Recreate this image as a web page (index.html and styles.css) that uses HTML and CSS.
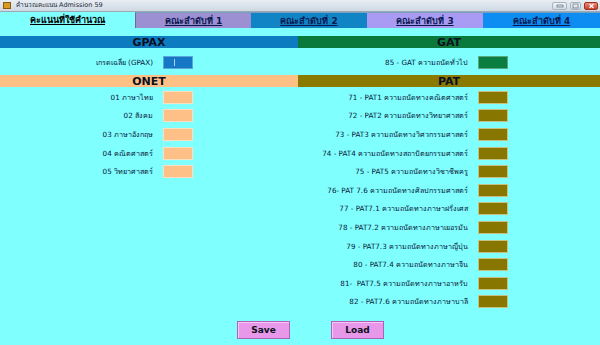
FILE: index.html
```html
<!DOCTYPE html>
<html lang="th">
<head>
<meta charset="utf-8">
<title>คำนวณคะแนน Admission 59</title>
<link rel="stylesheet" href="styles.css">
</head>
<body>
<div class="window">
  <div class="titlebar">
    <span class="app-icon"></span>
    <span class="title">คำนวณคะแนน Admission 59</span>
    <div class="controls">
      <span class="ctl min"><svg width="8" height="6" viewBox="0 0 8 6"><rect x="1" y="2" width="6" height="2" fill="none" stroke="#6a7a8a" stroke-width="0.8"/></svg></span>
      <span class="ctl max"><svg width="7" height="6" viewBox="0 0 7 6"><rect x="1" y="1" width="5" height="4" fill="none" stroke="#6a7a8a" stroke-width="0.8"/></svg></span>
      <span class="ctl close"><svg width="7" height="6" viewBox="0 0 7 6"><path d="M1.5 1L5.5 5M5.5 1L1.5 5" stroke="#fff" stroke-width="1.2"/></svg></span>
    </div>
  </div>
  <div class="tabs">
    <div class="tab tab-active">คะแนนที่ใช้คำนวณ</div>
    <div class="tab tab-f1">คณะลำดับที่ 1</div>
    <div class="tab tab-f2">คณะลำดับที่ 2</div>
    <div class="tab tab-f3">คณะลำดับที่ 3</div>
    <div class="tab tab-f4">คณะลำดับที่ 4</div>
  </div>
  <div class="panel">
    <div class="col col-left">
      <div class="bar bar-gpax">GPAX</div>
      <div class="single">
        <span class="label">เกรดเฉลี่ย (GPAX)</span>
        <span class="box box-gpax"><span class="caret"></span></span>
      </div>
      <div class="bar bar-onet">ONET</div>
      <div class="rows">
        <div class="row"><span class="label">01 ภาษาไทย</span><span class="box box-onet"></span></div>
        <div class="row"><span class="label">02 สังคม</span><span class="box box-onet"></span></div>
        <div class="row"><span class="label">03 ภาษาอังกฤษ</span><span class="box box-onet"></span></div>
        <div class="row"><span class="label">04 คณิตศาสตร์</span><span class="box box-onet"></span></div>
        <div class="row"><span class="label">05 วิทยาศาสตร์</span><span class="box box-onet"></span></div>
      </div>
    </div>
    <div class="col col-right">
      <div class="bar bar-gat">GAT</div>
      <div class="single">
        <span class="label">85 - GAT ความถนัดทั่วไป</span>
        <span class="box box-gat"></span>
      </div>
      <div class="bar bar-pat">PAT</div>
      <div class="rows">
        <div class="row"><span class="label">71 - PAT1 ความถนัดทางคณิตศาสตร์</span><span class="box box-pat"></span></div>
        <div class="row"><span class="label">72 - PAT2 ความถนัดทางวิทยาศาสตร์</span><span class="box box-pat"></span></div>
        <div class="row"><span class="label">73 - PAT3 ความถนัดทางวิศวกรรมศาสตร์</span><span class="box box-pat"></span></div>
        <div class="row"><span class="label">74 - PAT4 ความถนัดทางสถาปัตยกรรมศาสตร์</span><span class="box box-pat"></span></div>
        <div class="row"><span class="label">75 - PAT5 ความถนัดทางวิชาชีพครู</span><span class="box box-pat"></span></div>
        <div class="row"><span class="label">76- PAT 7.6 ความถนัดทางศิลปกรรมศาสตร์</span><span class="box box-pat"></span></div>
        <div class="row"><span class="label">77 - PAT7.1 ความถนัดทางภาษาฝรั่งเศส</span><span class="box box-pat"></span></div>
        <div class="row"><span class="label">78 - PAT7.2 ความถนัดทางภาษาเยอรมัน</span><span class="box box-pat"></span></div>
        <div class="row"><span class="label">79 - PAT7.3 ความถนัดทางภาษาญี่ปุ่น</span><span class="box box-pat"></span></div>
        <div class="row"><span class="label">80 - PAT7.4 ความถนัดทางภาษาจีน</span><span class="box box-pat"></span></div>
        <div class="row"><span class="label">81-&nbsp; PAT7.5 ความถนัดทางภาษาอาหรับ</span><span class="box box-pat"></span></div>
        <div class="row"><span class="label">82 - PAT7.6 ความถนัดทางภาษาบาลี</span><span class="box box-pat"></span></div>
      </div>
    </div>
  </div>
  <div class="actions">
    <button class="btn">Save</button>
    <button class="btn">Load</button>
  </div>
</div>
</body>
</html>
```
FILE: styles.css
```css
html, body {
  margin: 0;
  padding: 0;
}
body {
  width: 600px;
  height: 345px;
  overflow: hidden;
  background: #80ffff;
  font-family: Tahoma, "DejaVu Sans", "Noto Sans", sans-serif;
  color: #0a1a3a;
}
.window {
  width: 600px;
  height: 345px;
  background: #80ffff;
}
.titlebar {
  height: 12px;
  display: flex;
  align-items: center;
  background: linear-gradient(#e9eef4, #cfd8e2);
  border-bottom: 1px solid #9aa8b8;
  box-sizing: border-box;
}
.app-icon {
  width: 6px;
  height: 5px;
  margin-left: 3px;
  background: #d89a20;
  border: 1px solid #8a5a10;
}
.title {
  font-size: 6.5px;
  margin-left: 5px;
  color: #1a2a3a;
  line-height: 1;
}
.controls {
  margin-left: auto;
  display: flex;
  gap: 3px;
  margin-right: 2px;
}
.ctl {
  height: 8px;
  display: flex;
  align-items: center;
  justify-content: center;
  border: 1px solid #a6b2c0;
  border-radius: 2px;
  background: linear-gradient(#f2f5f8, #d2dae3);
  box-sizing: border-box;
}
.ctl.min { width: 15px; }
.ctl.max { width: 11px; }
.ctl.close {
  width: 14px;
  background: linear-gradient(#ec8a7a, #c8402a);
  border-color: #a03020;
}
.tabs {
  display: flex;
  height: 16px;
}
.tab {
  display: flex;
  align-items: center;
  justify-content: center;
  font-size: 9px;
  font-weight: bold;
  text-decoration: underline;
  color: #0a1850;
  box-sizing: border-box;
  border-top: 1px solid #7aa0c0;
}
.tab-active {
  width: 135px;
  background: #80ffff;
  color: #000;
  border-top: none;
}
.tab-f1 { width: 116px; background: #9c8fd2; border-left: 1px solid #6a6aa0; }
.tab-f2 { width: 116px; background: #1184c6; }
.tab-f3 { width: 116px; background: #a99bf3; }
.tab-f4 { width: 117px; background: #0d8cf2; }
.panel {
  display: grid;
  grid-template-columns: 298px 302px;
  margin-top: 8px;
}
.bar {
  height: 12px;
  display: flex;
  align-items: center;
  justify-content: center;
  font-size: 11px;
  font-weight: bold;
  color: #0a1020;
}
.bar-gpax { background: #0c7bc0; }
.bar-gat { background: #0a7a3c; }
.bar-onet { background: #ffc086; }
.bar-pat { background: #8a7a00; }
.single, .row {
  display: flex;
  align-items: center;
  gap: 10px;
}
.single {
  height: 27px;
  padding-top: 1px;
  box-sizing: border-box;
}
.rows {
  padding-top: 1px;
}
.row {
  height: 18.6px;
}
.label {
  font-size: 7.2px;
  text-align: right;
  white-space: nowrap;
  flex: none;
  color: #08183a;
}
.col-left .label { width: 153px; }
.col-right .label { width: 170px; }
.box {
  width: 30px;
  height: 13px;
  box-sizing: border-box;
  flex: none;
  display: flex;
  align-items: center;
}
.box-gpax { background: #1678c4; border: 1px solid #5aa6dc; }
.caret {
  width: 1px;
  height: 7px;
  margin-left: 10px;
  background: #a8d0f0;
}
.box-gat { background: #0a7e40; border: 1px solid #5aa880; }
.box-onet { background: #ffc088; border: 1px solid #f8e0c0; }
.box-pat { background: #877700; border: 1px solid #c8c080; }
.actions {
  display: flex;
  gap: 41px;
  padding-left: 237px;
  margin-top: 10px;
}
.btn {
  width: 53px;
  height: 18px;
  padding: 0;
  font-family: Tahoma, "DejaVu Sans", sans-serif;
  font-size: 9px;
  font-weight: bold;
  color: #0a1020;
  background: #e898e8;
  border: 1px solid #b060b8;
  box-shadow: inset 1px 1px 0 #f6c8f6;
}
```
